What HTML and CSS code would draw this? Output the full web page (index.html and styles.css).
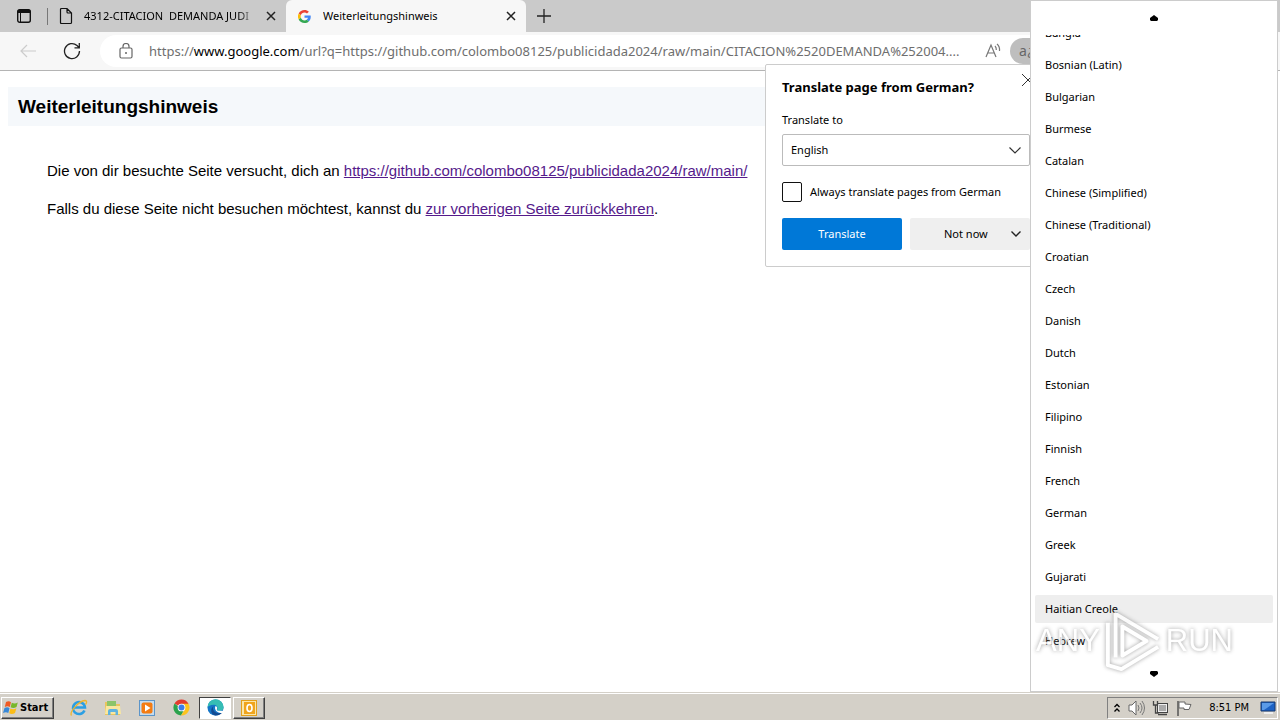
FILE: index.html
```html
<!DOCTYPE html>
<html lang="de">
<head>
<meta charset="utf-8">
<title>Weiterleitungshinweis</title>
<link rel="stylesheet" href="styles.css">
</head>
<body>
<header class="tabstrip">
  <button class="tab-actions" aria-label="Tab actions"><svg width="16" height="16" viewBox="0 0 16 16"><rect x="1.7" y="1.7" width="12.6" height="12.6" rx="2" fill="none" stroke="#111" stroke-width="1.4"/><path d="M1.500 5V3.500a2 2 0 0 1 2-2h9a2 2 0 0 1 2 2V5z" fill="#111"/><path d="M4.500 5v9" stroke="#111"/></svg></button>
  <div class="tab">
    <svg class="tab-icon" width="16" height="18" viewBox="0 0 16 18"><path d="M2.5 2.5q0-1 1-1H9l4.500 4.500v9.500q0 1-1 1h-9q-1 0-1-1zM9 1.500V5q0 1 1 1h3.500" fill="none" stroke="#111" stroke-width="1.2"/></svg>
    <span class="tab-title faded">4312-CITACION&nbsp; DEMANDA JUDI</span>
    <button class="close" aria-label="Close tab"><svg width="10" height="10" viewBox="0 0 10 10"><path d="M1 1l8 8M9 1L1 9" stroke="#222" stroke-width="1.5"/></svg></button>
  </div>
  <div class="tab active">
    <svg class="tab-icon" width="13" height="13" viewBox="0 0 48 48"><path fill="#ea4335" d="M24 9.500c3.500 0 6.700 1.200 9.200 3.600l6.900-6.900C35.900 2.400 30.500 0 24 0 14.600 0 6.500 5.400 2.600 13.200l8 6.200C12.400 13.700 17.700 9.500 24 9.500z"/><path fill="#4285f4" d="M47 24.500c0-1.600-.2-3.100-.4-4.500H24v9h12.900c-.6 3-2.300 5.500-4.800 7.200l7.700 6C44.400 38 47 31.800 47 24.500z"/><path fill="#fbbc05" d="M10.500 28.600a15 15 0 0 1 0-9.200l-8-6.200a24 24 0 0 0 0 21.600z"/><path fill="#34a853" d="M24 48c6.500 0 11.900-2.100 15.900-5.800l-7.700-6c-2.200 1.500-5 2.300-8.200 2.300-6.300 0-11.600-4.200-13.500-9.900l-8 6.200C6.500 42.600 14.600 48 24 48z"/></svg>
    <span class="tab-title">Weiterleitungshinweis</span>
    <button class="close" aria-label="Close tab"><svg width="10" height="10" viewBox="0 0 10 10"><path d="M1 1l8 8M9 1L1 9" stroke="#222" stroke-width="1.5"/></svg></button>
  </div>
  <button class="new-tab" aria-label="New tab"><svg width="14" height="14" viewBox="0 0 14 14"><path d="M7 0v14M0 7h14" stroke="#222" stroke-width="1.3"/></svg></button>
</header>

<nav class="toolbar">
  <button class="nav" aria-label="Back"><svg width="16" height="14" viewBox="0 0 16 14"><path d="M16 7H1M7 1L1 7l6 6" fill="none" stroke="#ccc" stroke-width="1.2"/></svg></button>
  <button class="nav" aria-label="Reload"><svg width="18" height="18" viewBox="0 0 18 18"><path d="M16.500 9A7.500 7.500 0 1 1 14 3.500L16 5.500M16.300 1v4.800h-4.800" fill="none" stroke="#222" stroke-width="1.3"/></svg></button>
  <div class="address">
    <svg width="14" height="16" viewBox="0 0 14 16"><rect x="1" y="5" width="12" height="10" rx="1.5" fill="none" stroke="#666" stroke-width="1.200"/><path d="M4 5V3.500a3 3 0 0 1 6 0V5" fill="none" stroke="#666" stroke-width="1.200"/><circle cx="7" cy="10" r="1" fill="#666"/></svg>
    <span class="url">https://<b>www.google.com</b>/url?q=https://github.com/colombo08125/publicidada2024/raw/main/CITACION%2520DEMANDA%252004....</span>
    <button class="read" aria-label="Read aloud"><svg width="16" height="16" viewBox="0 0 16 16"><path d="M1 14L6 2l5 12M2.800 10h6.500M10 3q1.500 1.500 1.300 4M12 1q3 2.500 2.500 7" fill="none" stroke="#777" stroke-width="1.200"/></svg></button>
    <button class="lang-pill" aria-label="Translate">aあ</button>
  </div>
</nav>

<main class="page">
  <h1>Weiterleitungshinweis</h1>
  <div class="notice">
    <p>Die von dir besuchte Seite versucht, dich an <a href="#main">https://github.com/colombo08125/publicidada2024/raw/main/</a></p>
    <p>Falls du diese Seite nicht besuchen möchtest, kannst du <a href="#back">zur vorherigen Seite zurückkehren</a>.</p>
  </div>
</main>

<section class="popup" lang="en">
  <button class="popup-close" aria-label="Close"><svg width="12" height="12" viewBox="0 0 12 12"><path d="M0 0l12 12M12 0L0 12" stroke="#333"/></svg></button>
  <h2>Translate page from German?</h2>
  <label class="to" for="lang">Translate to</label>
  <div class="select-wrap">
    <select id="lang"><option>English</option></select>
    <svg class="chevron" width="12" height="7" viewBox="0 0 12 7"><path d="M.5.500L6 6 11.500.500" fill="none" stroke="#333" stroke-width="1.200"/></svg>
  </div>
  <label class="always"><input type="checkbox">Always translate pages from German</label>
  <div class="actions">
    <button class="primary">Translate</button>
    <button class="secondary"><span>Not now</span><svg width="10" height="6" viewBox="0 0 10 6"><path d="M.5.500L5 5 9.500.500" fill="none" stroke="#222" stroke-width="1.400"/></svg></button>
  </div>
</section>

<section class="menu" lang="en" aria-label="Languages">
  <button class="scroll" aria-label="Scroll up"><svg width="8" height="6" viewBox="0 0 8 6"><path d="M4 0L8 3v2L7 6H1L0 5V3z"/></svg></button>
  <div class="list">
    <ul>
      <li><button>Bangla</button></li>
      <li><button>Bosnian (Latin)</button></li>
      <li><button>Bulgarian</button></li>
      <li><button>Burmese</button></li>
      <li><button>Catalan</button></li>
      <li><button>Chinese (Simplified)</button></li>
      <li><button>Chinese (Traditional)</button></li>
      <li><button>Croatian</button></li>
      <li><button>Czech</button></li>
      <li><button>Danish</button></li>
      <li><button>Dutch</button></li>
      <li><button>Estonian</button></li>
      <li><button>Filipino</button></li>
      <li><button>Finnish</button></li>
      <li><button>French</button></li>
      <li><button>German</button></li>
      <li><button>Greek</button></li>
      <li><button>Gujarati</button></li>
      <li><button class="hot">Haitian Creole</button></li>
      <li><button>Hebrew</button></li>
    </ul>
  </div>
  <button class="scroll" aria-label="Scroll down"><svg width="8" height="6" viewBox="0 0 8 6"><path d="M4 6L8 3V1L7 0H1L0 1v2z"/></svg></button>
</section>

<div class="watermark" aria-hidden="true">
  <span>ANY</span>
  <svg width="58" height="64" viewBox="0 0 60 66" fill="none" stroke="#fff" stroke-width="4" stroke-linejoin="round"><path d="M19 18v30L44 33zM12 50V5l44 26M4 14v44l14 4L56 39"/></svg>
  <span>RUN</span>
</div>

<footer class="taskbar" lang="en">
  <button class="start"><svg width="16" height="16" viewBox="0 0 16 16"><path d="M3 2q3-1.500 5 .3L6.800 7q-2.300-1.500-5 0z" fill="#ef5a24"/><path d="M8.800 2.700q3 1.500 6-.3L13.500 7q-3 1.800-5.900.300z" fill="#78b72a"/><path d="M1.500 8q3-1.500 5 .2L5.300 13Q3 11.500 0 13z" fill="#3788d8"/><path d="M7.400 8.500q3 1.500 6-.2L12 13q-3 1.700-5.800.300z" fill="#fbbd17"/></svg>Start</button>
  <div class="apps">
    <button aria-label="Internet Explorer"><svg width="18" height="18" viewBox="0 0 18 18"><path d="M14.500 11.500A6 6 0 1 1 15 8.500H4" fill="none" stroke="#2b9fe3" stroke-width="2.500"/><path d="M1.500 16.500C-1 13 9 2 15 1.500q3 .5.500 4" fill="none" stroke="#efb52b" stroke-width="1.300"/></svg></button>
    <button aria-label="Explorer"><svg width="18" height="18" viewBox="0 0 18 18"><path d="M1 3h6l1 2h8v11H1z" fill="#e9c45e"/><path d="M3 2h9v5H3z" fill="#8bc46a"/><path d="M2 7h14l1 8H1z" fill="#f9e7a0"/><path d="M4 16v-4q0-2 2-2h6q2 0 2 2v4h-2.500v-3h-5v3z" fill="#5fb3df"/></svg></button>
    <button aria-label="Media Player"><svg width="18" height="18" viewBox="0 0 18 18"><rect x="1.500" y="1.500" width="15" height="15" fill="#c5dcef" stroke="#5c95c9"/><rect x="3.500" y="3.500" width="11" height="11" rx="2" fill="#f47c13"/><path d="M7 5.500L12.500 9 7 12.500z" fill="#fff"/></svg></button>
    <button aria-label="Chrome"><svg width="17" height="17" viewBox="0 0 18 18"><path d="M9 9L1.600 4.700A8.500 8.500 0 0 1 16.400 5z" fill="#e33b2e"/><path d="M9 9h-2L1.600 4.700A8.500 8.500 0 0 0 8.500 17.500L12 11z" fill="#2ba24c"/><path d="M9 5h7.400A8.500 8.500 0 0 1 8.500 17.500L12.500 11z" fill="#fcc31e"/><circle cx="9" cy="9" r="4.100" fill="#fff"/><circle cx="9" cy="9" r="3.200" fill="#3d7de8"/></svg></button>
    <button class="pressed" aria-label="Edge"><svg width="17" height="17" viewBox="0 0 18 18"><circle cx="9" cy="9" r="8.500" fill="#1475c7"/><path d="M.5 9A8.500 8.500 0 0 1 17.500 8.500c.2 3-2 4-4.500 4-2 0-3-.8-2-2C12 8 9.500 6 7 6 3.500 6 1 7.500.5 9z" fill="#36bdb4"/><path d="M7 7.500c-2 3 .5 7.500 5 7.500 2 0 3.500-.7 4.500-2-1 3.500-5 4.800-8 4.400C4 16.500 3 10.500 7 7.500z" fill="#114a91"/><path d="M9 7.500q2.500 1 1.500 3.300c-.5 1 .8 1.700 2.500 1.700l4.500 0-1 2c-5 1.500-9.500-3-7.500-7z" fill="#fff"/></svg></button>
    <button class="raised" aria-label="Outlook"><svg width="18" height="18" viewBox="0 0 18 18"><rect x="1.500" y="1.500" width="15" height="15" fill="#fbe6a8" stroke="#e3a01a"/><rect x="4" y="3" width="11" height="12" fill="#f0a41c"/><ellipse cx="9.500" cy="9" rx="2.500" ry="3.500" fill="none" stroke="#fff" stroke-width="1.600"/></svg></button>
  </div>
  <div class="tray">
    <svg width="8" height="12" viewBox="0 0 8 12"><path d="M1.500 5L4 2.500 6.500 5M1.500 9.500L4 7l2.500 2.500" fill="none" stroke="#000" stroke-width="1.300"/></svg>
    <svg width="17" height="16" viewBox="0 0 17 16"><path d="M1 5h3l4-4v14l-4-4H1z" fill="#fff" stroke="#666"/><path d="M10 5q2 3 0 6M12 3q4 5 0 10M14 1q5 7 0 14" fill="none" stroke="#777"/></svg>
    <svg width="17" height="16" viewBox="0 0 17 16"><rect x="5.500" y="3.500" width="10" height="9" fill="#eee" stroke="#444"/><path d="M7 5h7v6H7z" fill="#aaa"/><path d="M1.500 1v4h4V1M3.500 5v8h3M6 14.500h9" fill="none" stroke="#444" stroke-width="1.300"/></svg>
    <svg width="17" height="16" viewBox="0 0 17 16"><path d="M2 1v15" stroke="#555" stroke-width="1.500"/><path d="M3 2h6v2l6 .5-2 5H8V8H3z" fill="#fff" stroke="#666"/></svg>
    <time>8:51 PM</time>
    <svg width="16" height="14" viewBox="0 0 16 14"><path d="M1 1h14v9H1z" fill="#1d62c4" stroke="#16396e"/><path d="M2 2h12L4 9H2z" fill="#5b9be8"/><path d="M4 12h9" stroke="#eee" stroke-width="2"/></svg>
  </div>
</footer>
</body>
</html>
```
FILE: styles.css
```css
* { box-sizing: border-box; }
body {
  margin: 0;
  min-height: 100vh;
  display: flex;
  flex-direction: column;
  position: relative;
  overflow: hidden;
  background: #fff;
  color: #000;
  font: 11px/16px "Noto Sans", "Open Sans", sans-serif;
}
button { border: 0; padding: 0; background: none; font: inherit; color: inherit; }
svg { display: block; flex: none; }

.tabstrip { display: flex; height: 32px; background: #cacaca; }
.tab-actions { width: 47px; display: grid; place-items: center; }
.tab {
  width: 239px;
  display: flex;
  align-items: center;
  gap: 10px;
  padding: 0 10px 0 11px;
  background: linear-gradient(#777, #777) 0 8px / 1px 17px no-repeat;
}
.tab.active {
  width: 240px;
  gap: 12px;
  border-radius: 6px 6px 0 0;
  background: #f7f7f7;
  padding-left: 12px;
}
.tab-title { flex: 1; overflow: hidden; white-space: nowrap; }
.faded { mask-image: linear-gradient(90deg, #000 90%, transparent); }
.new-tab { width: 36px; display: grid; place-items: center; }

.toolbar {
  display: flex;
  align-items: center;
  height: 39px;
  padding: 0 200px 0 6px;
  background: #f7f7f7;
  border-bottom: 1px solid #b4b4b4;
}
.nav { width: 44px; height: 32px; display: grid; place-items: center; }
.address {
  flex: 1;
  min-width: 0;
  height: 32px;
  margin-left: 6px;
  display: flex;
  align-items: center;
  padding: 0 30px 0 19px;
  border-radius: 16px;
  background: #fff;
}
.url {
  flex: 1;
  min-width: 0;
  margin-left: 16px;
  overflow: hidden;
  white-space: nowrap;
  font-size: 13px;
  line-height: 20px;
  color: #6e6e6e;
}
.url b { font-weight: 400; color: #000; }
.read { margin: 0 9px 0 13px; }
.lang-pill {
  flex: none;
  width: 40px;
  height: 26px;
  padding-left: 9px;
  border-radius: 13px;
  background: #bebebe;
  color: #666;
  font-size: 14px;
  text-align: left;
}

.page { flex: 1; padding: 16px 8px; font: 15px/18px "Liberation Sans", Arial, sans-serif; }
.page h1 {
  margin: 0;
  padding: 8px 10px;
  background: #f5f8fb;
  font-size: 19px;
  line-height: 23px;
}
.notice { padding: 36px 39px; white-space: nowrap; }
.notice p { margin: 0 0 20px; }
.notice a { color: #551a8b; }

.popup {
  position: absolute;
  top: 64px;
  right: 233px;
  width: 282px;
  padding: 14px 16px 16px;
  background: #fff;
  border: 1px solid #ccc;
  border-radius: 2px;
}
.popup-close { position: absolute; top: 9px; right: 12px; }
.popup h2 { margin: 0 0 17px; font-size: 13px; line-height: 16px; }
.to { display: block; margin-bottom: 6px; }
.select-wrap { position: relative; }
.select-wrap select {
  width: 100%;
  height: 32px;
  padding: 0 8px;
  appearance: none;
  border: 1px solid #bbb;
  border-radius: 2px;
  background: #fff;
  color: #000;
  font: inherit;
}
.chevron { position: absolute; top: 13px; right: 9px; }
.always { display: flex; align-items: center; gap: 8px; margin: 16px 0; white-space: nowrap; }
.always input {
  appearance: none;
  width: 20px;
  height: 20px;
  margin: 0;
  border: 1px solid #111;
  border-radius: 2px;
}
.actions { display: grid; grid-template-columns: 1fr 1fr; gap: 8px; }
.actions button { height: 32px; border-radius: 2px; }
.actions .primary { background: #0078d7; color: #fff; }
.actions .secondary {
  display: flex;
  align-items: center;
  justify-content: space-between;
  padding: 0 9px 0 34px;
  background: #efefef;
}

.menu {
  position: absolute;
  top: 0;
  bottom: 28px;
  right: 2px;
  width: 248px;
  display: flex;
  flex-direction: column;
  background: #fff;
  border: 1px solid #ccc;
}
.scroll { height: 34px; flex: none; display: grid; place-items: center; }
.list { flex: 1; min-height: 0; overflow: hidden; }
.list ul { margin: -18px 0 0; padding: 0 4px; list-style: none; }
.list li { padding: 2px 0; }
.list button { display: block; width: 100%; height: 28px; padding: 0 10px; border-radius: 2px; text-align: left; }
.list .hot { background: #eee; }

.watermark {
  position: absolute;
  right: 47px;
  bottom: 47px;
  display: flex;
  align-items: center;
  gap: 4px;
  color: #fff;
  font: 31px/44px "Liberation Sans", sans-serif;
  filter: drop-shadow(0 0 2px #888);
  opacity: .8;
  pointer-events: none;
}

.taskbar {
  display: flex;
  align-items: center;
  height: 28px;
  padding: 2px 2px 0 1px;
  background: #d4d0c8;
  border-top: 1px solid #d4d0c8;
  box-shadow: inset 0 1px #fff;
}
.taskbar .start, .taskbar .raised {
  border: 1px solid;
  border-color: #fff #404040 #404040 #fff;
  box-shadow: inset -1px -1px #808080;
}
.start {
  display: flex;
  align-items: center;
  gap: 1px;
  width: 53px;
  height: 22px;
  padding-left: 1px;
  font: bold 11px/16px "DejaVu Sans Condensed", "Open Sans", sans-serif;
}
.apps { display: flex; align-items: center; flex: 1; margin-left: 8px; }
.apps button { width: 34px; height: 22px; display: grid; place-items: center; }
.apps .pressed {
  width: 32px;
  margin-left: 1px;
  border: 1px solid;
  border-color: #404040 #fff #fff #404040;
  background: #fff;
}
.apps .raised { width: 32px; margin-left: 2px; }
.tray {
  display: flex;
  align-items: center;
  gap: 7px;
  height: 22px;
  padding: 0 1px 0 5px;
  border: 1px solid;
  border-color: #808080 #fff #fff #808080;
}
.tray time { margin: 0 4px 0 9px; font: 11px/16px "DejaVu Sans Condensed", Tahoma, sans-serif; }
```
